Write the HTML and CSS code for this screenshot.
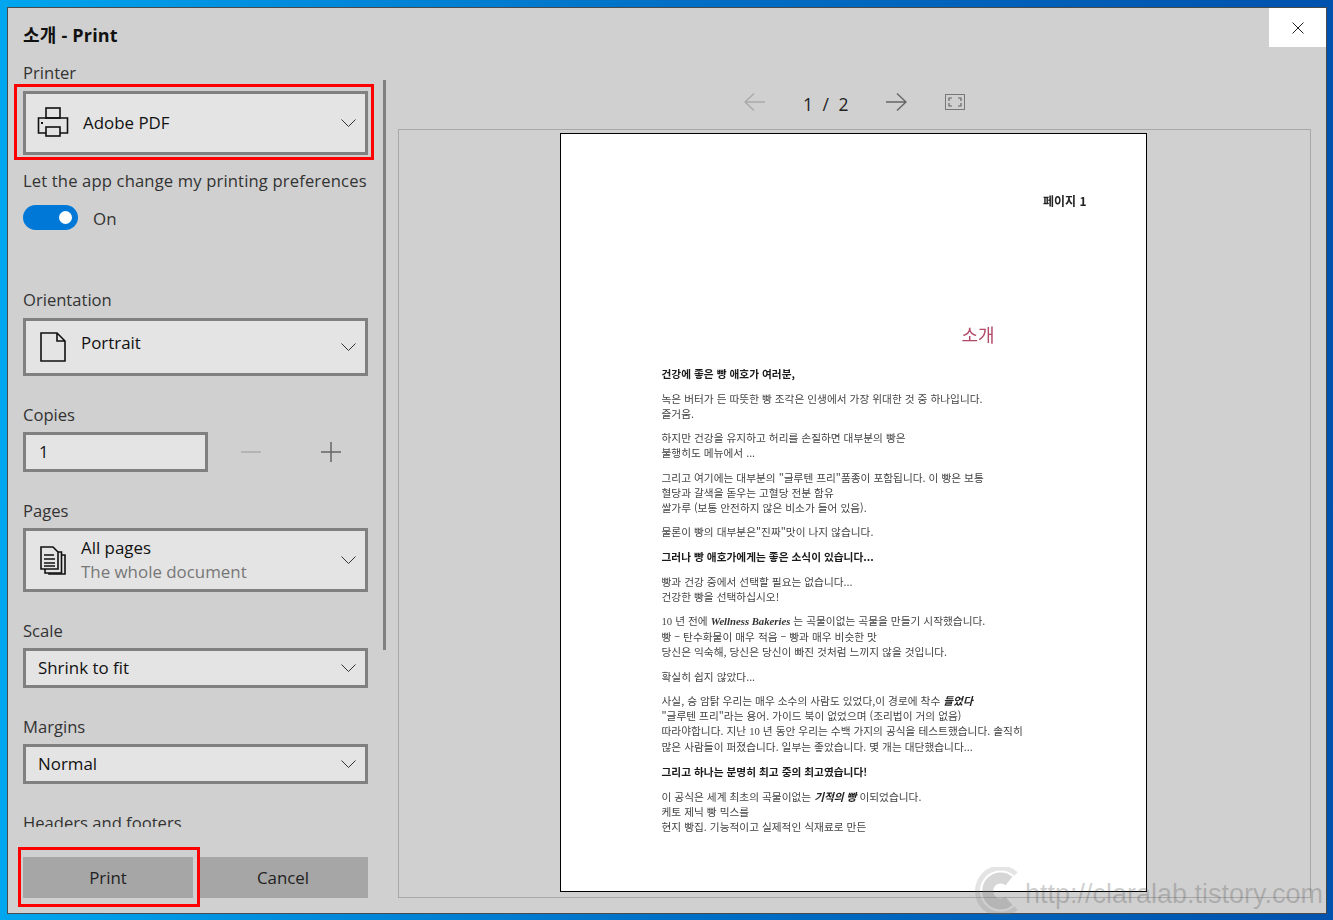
FILE: index.html
```html
<!DOCTYPE html>
<html lang="ko">
<head>
<meta charset="utf-8">
<title>소개 - Print</title>
<link rel="stylesheet" href="styles.css">
</head>
<body>
<div class="dialog">
  <aside class="side">
    <div class="scroll">
      <h1 class="title">소개 - Print</h1>
      <div class="label first">Printer</div>
      <div class="hl-wrap">
        <div class="select tall">
          <svg class="ic printer" width="32" height="30" viewBox="0 0 32 30"><g fill="none" stroke="#111" stroke-width="1.6"><rect x="9" y="1" width="14" height="10"/><path d="M9 26H1.500V11h29v15H23"/><rect x="9" y="20" width="14" height="9"/></g><rect x="4" y="15" width="2" height="2" fill="#111"/></svg>
          <span class="val">Adobe PDF</span>
          <svg class="chev" width="15" height="8" viewBox="0 0 15 8"><path d="M.5.5l7 7 7-7" fill="none" stroke="#333"/></svg>
        </div>
        <div class="hl hl-printer"></div>
      </div>
      <div class="label pref">Let the app change my printing preferences</div>
      <div class="toggle-row">
        <span class="toggle"><span class="knob"></span></span>
        <span class="on">On</span>
      </div>
      <div class="label orient">Orientation</div>
      <div class="select portrait">
        <svg class="ic" width="26" height="30" viewBox="0 0 26 30"><path d="M1 1h16l8 8v20H1z M17 1v8h8" fill="none" stroke="#111" stroke-width="1.6"/></svg>
        <span class="val raised">Portrait</span>
        <svg class="chev" width="15" height="8" viewBox="0 0 15 8"><path d="M.5.5l7 7 7-7" fill="none" stroke="#333"/></svg>
      </div>
      <div class="label gap">Copies</div>
      <div class="copies">
        <div class="input">1</div>
        <span class="minus"></span>
        <svg class="plus" width="20" height="20" viewBox="0 0 20 20"><path d="M0 10h20M10 0v20" stroke="#666" stroke-width="1.5"/></svg>
      </div>
      <div class="label gap">Pages</div>
      <div class="select pages">
        <svg class="ic" width="26" height="29" viewBox="0 0 26 29"><g fill="none" stroke="#111" stroke-width="1.6"><path d="M1 1h12l5 5v17H1z"/><path d="M18 6h3.500v21H5v-4"/><path d="M21.500 9H25v19H9v-1"/><path d="M4 9h10M4 13h11M4 17h11M4 20h11"/></g></svg>
        <span class="stack"><span class="val">All pages</span><span class="sub">The whole document</span></span>
        <svg class="chev" width="15" height="8" viewBox="0 0 15 8"><path d="M.5.5l7 7 7-7" fill="none" stroke="#333"/></svg>
      </div>
      <div class="label gap">Scale</div>
      <div class="select short">
        <span class="val">Shrink to fit</span>
        <svg class="chev" width="15" height="8" viewBox="0 0 15 8"><path d="M.5.5l7 7 7-7" fill="none" stroke="#333"/></svg>
      </div>
      <div class="label gap">Margins</div>
      <div class="select short">
        <span class="val">Normal</span>
        <svg class="chev" width="15" height="8" viewBox="0 0 15 8"><path d="M.5.5l7 7 7-7" fill="none" stroke="#333"/></svg>
      </div>
      <div class="label gap">Headers and footers</div>
    </div>
    <div class="footer">
      <button class="btn print">Print<span class="hl hl-print"></span></button>
      <button class="btn cancel">Cancel</button>
    </div>
    <div class="scrollbar"></div>
  </aside>
  <main class="main">
    <div class="topbar">
      <div class="close"><svg width="12" height="12" viewBox="0 0 12 12"><path d="M.5.5l11 11M11.500.5l-11 11" stroke="#222"/></svg></div>
    </div>
    <div class="toolbar">
      <svg width="21" height="18" viewBox="0 0 21 18"><path d="M21 9H1M10 .5L1 9l9 8.500" fill="none" stroke="#aaa" stroke-width="1.400"/></svg>
      <span class="count">1 / 2</span>
      <svg width="21" height="18" viewBox="0 0 21 18"><path d="M0 9h20M11 .5L20 9l-9 8.500" fill="none" stroke="#666" stroke-width="1.400"/></svg>
      <svg width="20" height="16" viewBox="0 0 20 16"><rect x=".5" y=".5" width="19" height="15" fill="none" stroke="#777"/><path d="M7 4H4v3M13 4h3v3M7 12H4V9M13 12h3V9" fill="none" stroke="#666" stroke-width="1.200"/></svg>
    </div>
    <div class="frame">
      <article class="page">
        <div class="pageno">페이지 1</div>
        <h2 class="doc-title">소개</h2>
        <p class="b">건강에 좋은 빵 애호가 여러분,</p>
        <p>녹은 버터가 든 따뜻한 빵 조각은 인생에서 가장 위대한 것 중 하나입니다.<br>즐거움.</p>
        <p>하지만 건강을 유지하고 허리를 손질하면 대부분의 빵은<br>불행히도 메뉴에서 ...</p>
        <p>그리고 여기에는 대부분의 "글루텐 프리"품종이 포함됩니다. 이 빵은 보통<br>혈당과 갈색을 돋우는 고혈당 전분 함유<br>쌀가루 (보통 안전하지 않은 비소가 들어 있음).</p>
        <p>물론이 빵의 대부분은"진짜"맛이 나지 않습니다.</p>
        <p class="b">그러나 빵 애호가에게는 좋은 소식이 있습니다...</p>
        <p>빵과 건강 중에서 선택할 필요는 없습니다...<br>건강한 빵을 선택하십시오!</p>
        <p><span class="serif">10</span> 년 전에 <em class="serif brand">Wellness Bakeries</em> 는 곡물이없는 곡물을 만들기 시작했습니다.<br>빵 – 탄수화물이 매우 적음 – 빵과 매우 비슷한 맛<br>당신은 익숙해, 당신은 당신이 빠진 것처럼 느끼지 않을 것입니다.</p>
        <p>확실히 쉽지 않았다...</p>
        <p>사실, 승 암탉 우리는 매우 소수의 사람도 있었다,이 경로에 착수 <em class="bi">들었다</em><br>"글루텐 프리"라는 용어. 가이드 북이 없었으며 (조리법이 거의 없음)<br>따라야합니다. 지난 <span class="serif">10</span> 년 동안 우리는 수백 가지의 공식을 테스트했습니다. 솔직히<br>많은 사람들이 퍼졌습니다. 일부는 좋았습니다. 몇 개는 대단했습니다...</p>
        <p class="b">그리고 하나는 분명히 최고 중의 최고였습니다!</p>
        <p>이 공식은 세계 최초의 곡물이없는 <em class="bi">기적의 빵</em> 이되었습니다.<br>케토 제닉 빵 믹스를<br>현지 빵집. 기능적이고 실제적인 식재료로 만든</p>
      </article>
    </div>
  </main>
  <div class="watermark">
    <svg width="50" height="48" viewBox="0 0 50 48"><path d="M41 7A23 23 0 1 0 41 41" fill="none" stroke="#787878" stroke-opacity=".2" stroke-width="5"/><path d="M34 14A13 13 0 1 0 34 34" fill="none" stroke="#787878" stroke-opacity=".3" stroke-width="11"/></svg>
    <span class="wm-text">http://claralab.tistory.com</span>
  </div>
</div>
</body>
</html>
```
FILE: styles.css
```css
* { box-sizing: border-box; }
html, body { margin: 0; height: 100%; }
body {
  width: 1333px;
  height: 920px;
  overflow: hidden;
  padding: 7px 6px 6px 7px;
  background: linear-gradient(90deg, #00a6ee 0%, #0088da 25%, #0070c6 50%, #0052ad 100%);
  font-family: "Open Sans", "Noto Sans CJK KR", sans-serif;
  color: #1a1a1a;
}
.dialog {
  position: relative;
  display: flex;
  height: 907px;
  background: #d0d0d0;
  border: 1px solid #4a4a4a;
}
.side {
  position: relative;
  width: 390px;
  flex: none;
  display: flex;
  flex-direction: column;
}
.scroll {
  height: 819px;
  flex: none;
  overflow: hidden;
  width: 375px;
  padding: 0 15px;
}
.title {
  margin: 15px 0 0;
  font-size: 18px;
  line-height: 24px;
  letter-spacing: .2px;
  font-weight: 700;
  color: #111;
  white-space: nowrap;
}
.label {
  font-size: 16.600px;
  line-height: 22px;
  color: #333;
  white-space: nowrap;
  margin-bottom: 6px;
}
.label.first { margin-top: 15px; margin-bottom: 7px; }
.label.pref { margin: 15px 0 13px; letter-spacing: .15px; }
.label.orient { margin-top: 59px; margin-bottom: 7px; }
.label.gap { margin-top: 28px; }
.select {
  display: flex;
  align-items: center;
  height: 58px;
  border: 3px solid #808080;
  background: #e4e4e4;
  padding: 0 9px 0 12px;
}
.select.tall { height: 64px; }
.select.pages { height: 64px; }
.select.short { height: 40px; }
.ic { flex: none; margin-left: 2px; }
.select .printer { margin: -3px 14px 0 -1px; }
.portrait .ic, .pages .ic { margin-right: 15px; }
.val { font-size: 16.900px; line-height: 22px; color: #111; white-space: nowrap; }
.raised { position: relative; top: -4px; }
.stack { display: flex; flex-direction: column; line-height: 24px; }
.stack .val { line-height: 24px; }
.sub { font-size: 16.900px; line-height: 24px; color: #777; white-space: nowrap; }
.chev { margin-left: auto; flex: none; }
.hl-wrap { position: relative; }
.hl { position: absolute; border: 3px solid #f00; pointer-events: none; }
.hl-printer { left: -9px; top: -7px; width: 360px; height: 76px; }
.toggle-row { display: flex; align-items: center; height: 25px; gap: 15px; }
.toggle {
  width: 55px;
  height: 25px;
  border-radius: 13px;
  background: #0078d7;
  display: flex;
  align-items: center;
  justify-content: flex-end;
  padding-right: 6px;
}
.knob { width: 13px; height: 13px; border-radius: 50%; background: #fff; }
.on { font-size: 16.900px; color: #333; position: relative; top: 1px; }
.copies { display: flex; align-items: center; height: 40px; }
.input {
  width: 185px;
  height: 40px;
  border: 3px solid #808080;
  background: #e4e4e4;
  font-size: 16.500px;
  line-height: 34px;
  padding-left: 13px;
  color: #111;
}
.minus { width: 20px; height: 2px; background: #b4b4b4; margin-left: 33px; }
.plus { margin-left: 60px; }
.footer {
  display: flex;
  padding: 30px 0 0 15px;
  width: 360px;
}
.btn {
  position: relative;
  height: 41px;
  border: 0;
  padding: 0;
  background: #a6a6a6;
  font: inherit;
  font-size: 16.900px;
  color: #222;
}
.print { width: 170px; }
.cancel { width: 170px; margin-left: 5px; }
.hl-print { left: -5px; top: -10px; width: 182px; height: 60px; z-index: 2; }
.scrollbar {
  position: absolute;
  left: 375px;
  top: 72px;
  width: 3px;
  height: 570px;
  background: #808080;
}
.main { flex: 1; display: flex; flex-direction: column; min-width: 0; }
.topbar { display: flex; justify-content: flex-end; height: 39px; flex: none; }
.close {
  width: 57px;
  height: 39px;
  background: #fff;
  display: flex;
  align-items: center;
  justify-content: center;
}
.toolbar {
  display: flex;
  align-items: center;
  justify-content: center;
  gap: 38px;
  height: 32px;
  margin: 39px 15px 11px 0;
  flex: none;
}
.count { font-size: 17.500px; line-height: 24px; width: 45px; text-align: center; white-space: nowrap; color: #222; position: relative; top: 2px; word-spacing: 5px; }
.frame {
  margin-right: 15px;
  height: 769px;
  flex: none;
  border: 1px solid #a8a8a8;
  padding-top: 3px;
  display: flex;
  justify-content: center;
}
.page {
  width: 587px;
  height: 759px;
  flex: none;
  margin-right: 3px;
  background: #fff;
  border: 1px solid #000;
  padding: 59px 60px 0 101px;
  font-family: "Noto Sans CJK KR", sans-serif;
  font-size: 10.700px;
  line-height: 15px;
  color: #444;
  overflow: hidden;
}
.page > * { filter: blur(.3px); }
.pageno { text-align: right; font-weight: 700; font-size: 12px; color: #222; white-space: nowrap; margin-right: -1px; }
.doc-title {
  margin: 114px 91px 0 0;
  text-align: right;
  font-size: 18px;
  line-height: 24px;
  font-weight: 400;
  color: #b04a66;
}
.page p { margin: 0 0 9.600px; white-space: nowrap; }
.doc-title + p { margin-top: 20px; }
.page .b { font-weight: 700; color: #1a1a1a; }
.serif { font-family: "Liberation Serif", serif; }
.brand { font-weight: 700; color: #333; }
.bi { font-weight: 700; font-style: italic; color: #222; }
.watermark {
  position: absolute;
  left: 967px;
  top: 859px;
  display: flex;
  align-items: center;
  pointer-events: none;
  white-space: nowrap;
}
.wm-text {
  font-family: "Liberation Sans", sans-serif;
  font-size: 27px;
  line-height: 30px;
  color: rgba(80, 80, 80, .28);
  position: relative;
  top: 3px;
}
```
